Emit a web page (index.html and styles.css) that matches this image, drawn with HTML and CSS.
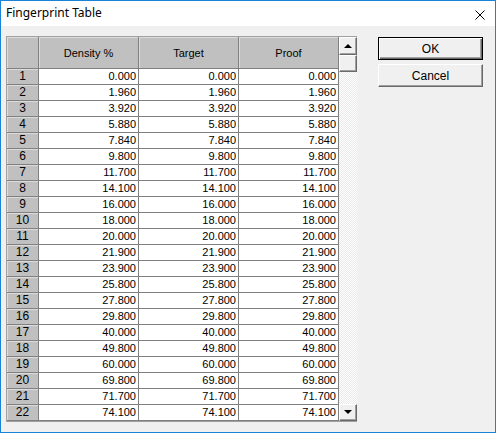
FILE: index.html
```html
<!DOCTYPE html>
<html>
<head>
<meta charset="utf-8">
<link rel="stylesheet" href="styles.css">
</head>
<body>
<div class="window">
  <div class="titlebar">
    <span class="title">Fingerprint Table</span>
    <svg class="close" width="10" height="10" viewBox="0 0 10 10"><path d="M0.5 0.5 L9.5 9.5 M9.5 0.5 L0.5 9.5" stroke="#000" stroke-width="1" fill="none"/></svg>
  </div>
  <div class="client">
    <div class="gridwrap">
      <div class="grid">
        <div class="hc"></div><div class="hc">Density %</div><div class="hc">Target</div><div class="hc">Proof</div>
        <div class="rn">1</div><div class="dc">0.000</div><div class="dc">0.000</div><div class="dc">0.000</div>
        <div class="rn">2</div><div class="dc">1.960</div><div class="dc">1.960</div><div class="dc">1.960</div>
        <div class="rn">3</div><div class="dc">3.920</div><div class="dc">3.920</div><div class="dc">3.920</div>
        <div class="rn">4</div><div class="dc">5.880</div><div class="dc">5.880</div><div class="dc">5.880</div>
        <div class="rn">5</div><div class="dc">7.840</div><div class="dc">7.840</div><div class="dc">7.840</div>
        <div class="rn">6</div><div class="dc">9.800</div><div class="dc">9.800</div><div class="dc">9.800</div>
        <div class="rn">7</div><div class="dc">11.700</div><div class="dc">11.700</div><div class="dc">11.700</div>
        <div class="rn">8</div><div class="dc">14.100</div><div class="dc">14.100</div><div class="dc">14.100</div>
        <div class="rn">9</div><div class="dc">16.000</div><div class="dc">16.000</div><div class="dc">16.000</div>
        <div class="rn">10</div><div class="dc">18.000</div><div class="dc">18.000</div><div class="dc">18.000</div>
        <div class="rn">11</div><div class="dc">20.000</div><div class="dc">20.000</div><div class="dc">20.000</div>
        <div class="rn">12</div><div class="dc">21.900</div><div class="dc">21.900</div><div class="dc">21.900</div>
        <div class="rn">13</div><div class="dc">23.900</div><div class="dc">23.900</div><div class="dc">23.900</div>
        <div class="rn">14</div><div class="dc">25.800</div><div class="dc">25.800</div><div class="dc">25.800</div>
        <div class="rn">15</div><div class="dc">27.800</div><div class="dc">27.800</div><div class="dc">27.800</div>
        <div class="rn">16</div><div class="dc">29.800</div><div class="dc">29.800</div><div class="dc">29.800</div>
        <div class="rn">17</div><div class="dc">40.000</div><div class="dc">40.000</div><div class="dc">40.000</div>
        <div class="rn">18</div><div class="dc">49.800</div><div class="dc">49.800</div><div class="dc">49.800</div>
        <div class="rn">19</div><div class="dc">60.000</div><div class="dc">60.000</div><div class="dc">60.000</div>
        <div class="rn">20</div><div class="dc">69.800</div><div class="dc">69.800</div><div class="dc">69.800</div>
        <div class="rn">21</div><div class="dc">71.700</div><div class="dc">71.700</div><div class="dc">71.700</div>
        <div class="rn">22</div><div class="dc">74.100</div><div class="dc">74.100</div><div class="dc">74.100</div>
      </div>
      <div class="scrollbar">
        <div class="sbtn"><span class="arrow-up"></span></div>
        <div class="thumb"></div>
        <div class="track"></div>
        <div class="sbtn down"><span class="arrow-down"></span></div>
      </div>
    </div>
    <div class="buttons">
      <div class="btn default">OK</div>
      <div class="btn">Cancel</div>
    </div>
  </div>
</div>
</body>
</html>
```
FILE: styles.css
```css
html, body {
  margin: 0;
  padding: 0;
  background: #f0f0f0;
}
.window {
  box-sizing: border-box;
  width: 496px;
  height: 433px;
  border: 1px solid #1883d7;
  background: #f0f0f0;
  display: flex;
  flex-direction: column;
  font-family: "Liberation Sans", Arial, sans-serif;
  font-size: 11px;
  color: #000;
}
.titlebar {
  height: 25px;
  background: #fff;
  display: flex;
  align-items: center;
  padding-left: 5px;
}
.title {
  font-family: "Noto Sans", "Open Sans", sans-serif;
  font-size: 12px;
  margin-top: -2px;
}
.close {
  margin-left: auto;
  margin-right: 10px;
  margin-top: 2px;
}
.client {
  display: flex;
  align-items: flex-start;
  padding: 10px 0 0 5px;
}
.gridwrap {
  display: flex;
  border-top: 1px solid #a0a0a0;
  border-left: 1px solid #a0a0a0;
  border-bottom: 1px solid #a0a0a0;
}
.grid {
  display: grid;
  grid-template-columns: 32px 100px 100px 100px;
  grid-template-rows: 32px;
  grid-auto-rows: 16px;
  background: #fff;
}
.grid > div {
  box-sizing: border-box;
  border-right: 1px solid #808080;
  border-bottom: 1px solid #808080;
  white-space: nowrap;
}
.hc {
  background: #c0c0c0;
  display: flex;
  align-items: center;
  justify-content: center;
  box-shadow: inset 1px 1px 0 #dcdcdc;
}
.rn {
  background: #c0c0c0;
  text-align: center;
  line-height: 15px;
  font-size: 12px;
  box-shadow: inset 1px 1px 0 #dcdcdc;
}
.dc {
  background: #fff;
  text-align: right;
  padding-right: 2px;
  line-height: 15px;
}
.scrollbar {
  width: 18px;
  display: flex;
  flex-direction: column;
}
.sbtn, .thumb {
  box-sizing: border-box;
  background: #f0f0f0;
  border-top: 1px solid #fff;
  border-left: 1px solid #fff;
  border-right: 1px solid #696969;
  border-bottom: 1px solid #696969;
  box-shadow: inset -1px -1px 0 #a0a0a0;
  display: flex;
  align-items: center;
  justify-content: center;
}
.sbtn {
  height: 18px;
}
.sbtn.down {
  height: 17px;
}
.thumb {
  height: 17px;
}
.track {
  flex: 1;
  background-color: #f0f0f0;
  background-image: conic-gradient(#ffffff 25%, #e9e9e9 0 50%, #ffffff 0 75%, #e9e9e9 0);
  background-size: 2px 2px;
}
.arrow-up {
  width: 0;
  height: 0;
  border-left: 4px solid transparent;
  border-right: 4px solid transparent;
  border-bottom: 4px solid #000;
  margin-top: -1px;
}
.arrow-down {
  width: 0;
  height: 0;
  border-left: 4px solid transparent;
  border-right: 4px solid transparent;
  border-top: 4px solid #000;
  margin-top: -1px;
}
.buttons {
  display: flex;
  flex-direction: column;
  gap: 4px;
  margin-left: 21px;
  margin-top: 1px;
}
.btn {
  box-sizing: border-box;
  width: 105px;
  height: 23px;
  background: #f0f0f0;
  border-top: 1px solid #fff;
  border-left: 1px solid #fff;
  border-right: 1px solid #696969;
  border-bottom: 1px solid #696969;
  box-shadow: inset -1px -1px 0 #a0a0a0;
  display: flex;
  align-items: center;
  justify-content: center;
  font-size: 12px;
}
.btn.default {
  border: 1px solid #000;
  box-shadow: inset 1px 1px 0 #fff, inset -1px -1px 0 #696969, inset -2px -2px 0 #a0a0a0;
}
```
